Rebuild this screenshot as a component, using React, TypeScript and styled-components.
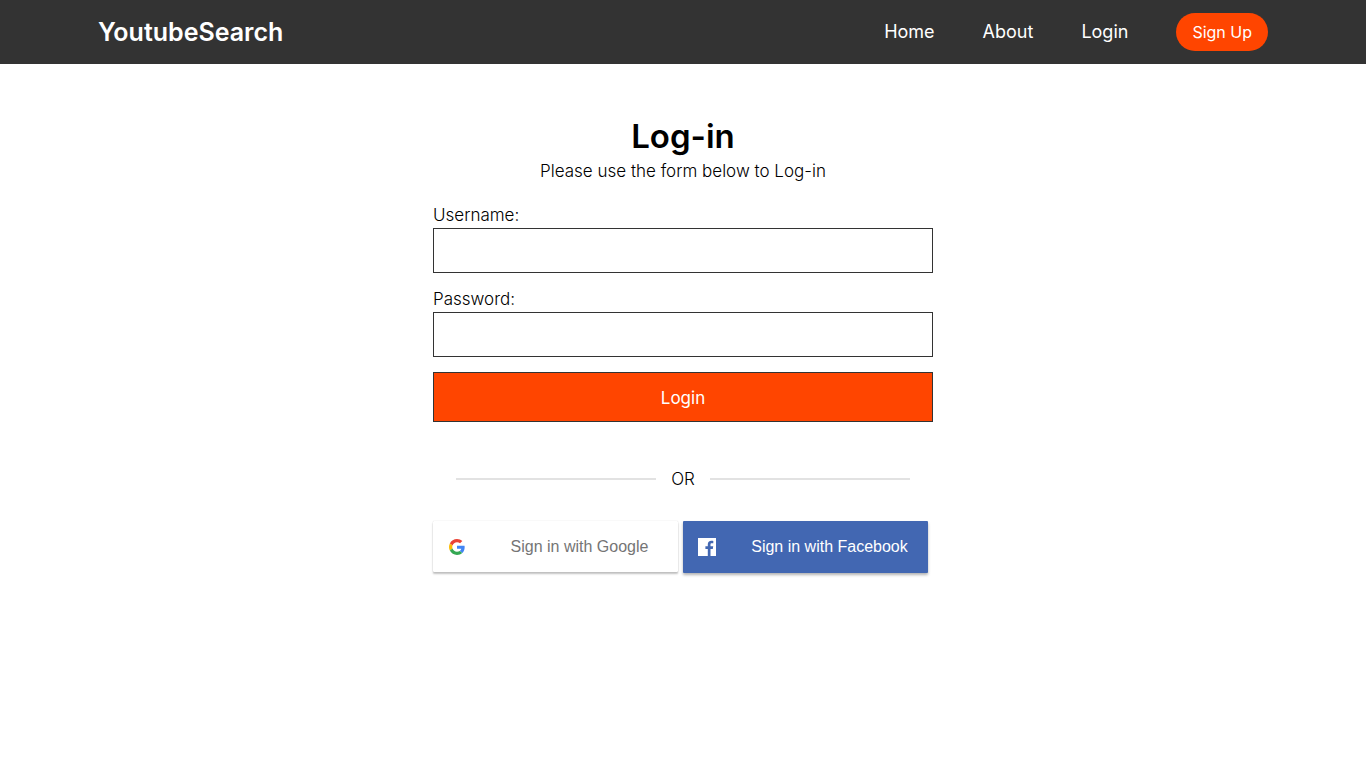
import React from "react";
import styled, { createGlobalStyle } from "styled-components";

const GlobalStyle = createGlobalStyle`
  * { box-sizing: border-box; margin: 0; padding: 0; }
  body {
    background: #fff;
    color: #000;
    font: 300 17px/20px Inter, sans-serif;
  }
  a { color: inherit; text-decoration: none; }
`;

const Header = styled.header`
  background: #333;
  color: #fff;
`;

const HeaderInner = styled.div`
  display: flex;
  align-items: center;
  justify-content: space-between;
  max-width: 1170px;
  min-height: 64px;
  margin: 0 auto;
`;

const Brand = styled.a`
  font-size: 25px;
  font-weight: 600;
  line-height: 32px;
`;

const Nav = styled.nav`
  display: flex;
  align-items: center;
  gap: 48px;
`;

const NavLink = styled.a`
  font-size: 18px;
  font-weight: 400;
`;

const SignUpLink = styled(NavLink)`
  padding: 9px 16px;
  border-radius: 20px;
  background: #ff4500;
  font-size: 16px;
`;

const Main = styled.main`
  width: 100%;
  max-width: 500px;
  margin: 0 auto;
  padding: 52px 0;
`;

const Intro = styled.div`
  text-align: center;
`;

const Title = styled.h1`
  font-size: 33px;
  font-weight: 600;
  line-height: 40px;
`;

const Subtitle = styled.p`
  margin-top: 5px;
`;

const Form = styled.form`
  display: flex;
  flex-direction: column;
  gap: 15px;
  margin-top: 23px;
`;

const Field = styled.div`
  display: flex;
  flex-direction: column;
  gap: 2px;
`;

const Label = styled.label`
  line-height: 22px;
`;

const Input = styled.input`
  width: 100%;
  height: 45px;
  padding: 0 12px;
  border: 1px solid #333;
  border-radius: 0;
  background: #fff;
  font: inherit;
`;

const SubmitButton = styled.button`
  height: 50px;
  padding-top: 2px;
  border: 1px solid #333;
  background: #ff4500;
  color: #fff;
  font: 400 17px/20px Inter, sans-serif;
  cursor: pointer;
`;

const Divider = styled.div`
  display: flex;
  align-items: center;
  justify-content: center;
  gap: 15px;
  margin-top: 47px;
`;

const Rule = styled.span`
  flex: 0 1 200px;
  height: 2px;
  background: #e2e2e2;
`;

const SocialRow = styled.div`
  display: flex;
  align-items: flex-start;
  gap: 5px;
  margin-top: 32px;
`;

const SocialButton = styled.button<{ $brand: "google" | "facebook" }>`
  display: flex;
  align-items: center;
  flex: 0 1 245px;
  height: ${({ $brand }) => ($brand === "google" ? 51 : 52)}px;
  padding: 0 15px;
  border: 0;
  border-radius: 1px;
  background: ${({ $brand }) => ($brand === "google" ? "#fff" : "#4267b2")};
  color: ${({ $brand }) => ($brand === "google" ? "#757575" : "#fff")};
  box-shadow: ${({ $brand }) =>
    $brand === "google"
      ? "0 2px 2px rgba(0, 0, 0, 0.24), 0 0 1px rgba(0, 0, 0, 0.24)"
      : "0 2px 3px rgba(0, 0, 0, 0.3)"};
  font: 400 16px/20px "Liberation Sans", Arial, sans-serif;
  cursor: pointer;
`;

const SocialLabel = styled.span`
  flex: 1;
  padding-left: 30px;
  text-align: center;
  white-space: nowrap;
`;

function GoogleLogo() {
  return (
    <svg width="18" height="18" viewBox="-3 -3 54 54" aria-hidden="true">
      <path fill="#EA4335" d="M24 9.5c3.54 0 6.71 1.22 9.21 3.6l6.85-6.85C35.9 2.38 30.47 0 24 0 14.62 0 6.51 5.38 2.56 13.22l7.98 6.19C12.43 13.72 17.74 9.5 24 9.5z" />
      <path fill="#4285F4" d="M46.98 24.55c0-1.57-.15-3.09-.38-4.55H24v9.02h12.94c-.58 2.96-2.26 5.48-4.78 7.18l7.73 6c4.51-4.18 7.09-10.36 7.09-17.65z" />
      <path fill="#FBBC05" d="M10.53 28.59c-.48-1.45-.76-2.99-.76-4.59s.27-3.14.76-4.59l-7.98-6.19C.92 16.46 0 20.12 0 24c0 3.88.92 7.54 2.56 10.78l7.97-6.19z" />
      <path fill="#34A853" d="M24 48c6.48 0 11.93-2.13 15.89-5.81l-7.73-6c-2.15 1.45-4.92 2.3-8.16 2.3-6.26 0-11.57-4.22-13.47-9.91l-7.98 6.19C6.51 42.62 14.62 48 24 48z" />
    </svg>
  );
}

function FacebookLogo() {
  return (
    <svg width="18" height="18" viewBox="0 0 18 18" aria-hidden="true">
      <path fill="#fff" d="M0 0h18v18h-5.5v-7h2.3l.4-2.7h-2.7V6.6c0-.8.3-1.3 1.4-1.3h1.4V2.9c-.3 0-1.1-.1-2-.1-2.1 0-3.5 1.2-3.5 3.5v2H7.4V11h2.4v7H0z" />
    </svg>
  );
}

export default function App() {
  return (
    <>
      <GlobalStyle />
      <Header>
        <HeaderInner>
          <Brand href="#">YoutubeSearch</Brand>
          <Nav>
            <NavLink href="#">Home</NavLink>
            <NavLink href="#">About</NavLink>
            <NavLink href="#">Login</NavLink>
            <SignUpLink href="#">Sign Up</SignUpLink>
          </Nav>
        </HeaderInner>
      </Header>
      <Main>
        <Intro>
          <Title>Log-in</Title>
          <Subtitle>Please use the form below to Log-in</Subtitle>
        </Intro>
        <Form onSubmit={(e) => e.preventDefault()}>
          <Field>
            <Label htmlFor="username">Username:</Label>
            <Input id="username" type="text" />
          </Field>
          <Field>
            <Label htmlFor="password">Password:</Label>
            <Input id="password" type="password" />
          </Field>
          <SubmitButton type="submit">Login</SubmitButton>
        </Form>
        <Divider>
          <Rule />
          <span>OR</span>
          <Rule />
        </Divider>
        <SocialRow>
          <SocialButton type="button" $brand="google">
            <GoogleLogo />
            <SocialLabel>Sign in with Google</SocialLabel>
          </SocialButton>
          <SocialButton type="button" $brand="facebook">
            <FacebookLogo />
            <SocialLabel>Sign in with Facebook</SocialLabel>
          </SocialButton>
        </SocialRow>
      </Main>
    </>
  );
}
